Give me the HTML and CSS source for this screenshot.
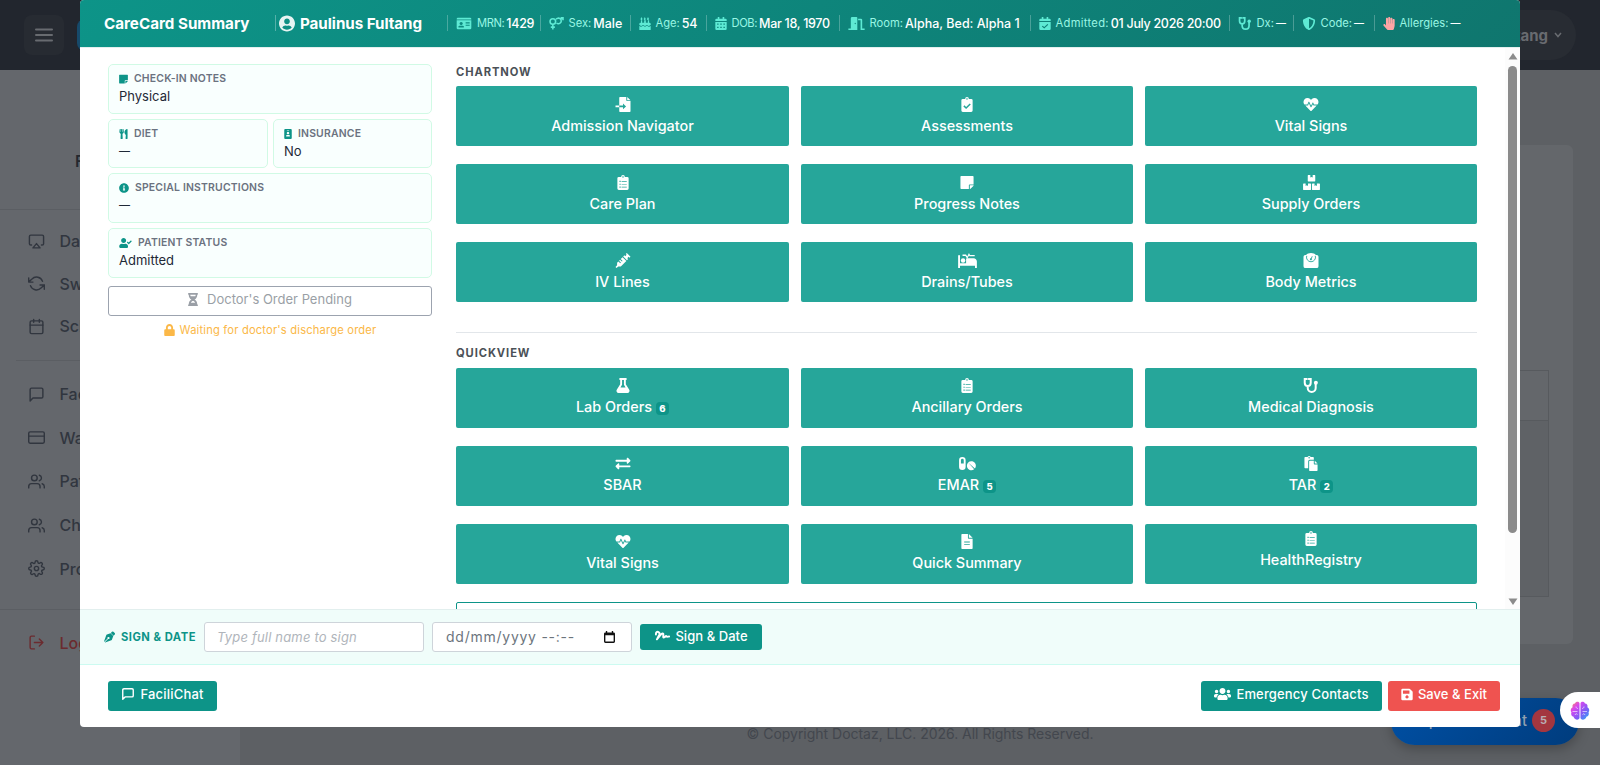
FILE: index.html
```html
<!DOCTYPE html>
<html lang="en">
<head>
<meta charset="utf-8">
<title>CareCard Summary</title>
<link rel="stylesheet" href="styles.css">
</head>
<body>
<svg class="sprite" aria-hidden="true">
  <symbol id="note" viewBox="0 0 448 512"><path d="M312 320h136V56c0-13.300-10.700-24-24-24H24C10.700 32 0 42.700 0 56v400c0 13.300 10.700 24 24 24h264V344c0-13.200 10.800-24 24-24zm129 55l-98 98c-4.500 4.500-10.600 7-17 7h-6V352h128v6.100c0 6.300-2.500 12.400-7 16.900z"/></symbol>
  <symbol id="utensils" viewBox="0 0 416 512"><path d="M207.900 15.200c.8 4.700 16.100 94.500 16.100 128.800 0 52.300-27.800 89.600-68.900 104.600L168 486.700c.7 13.700-10.200 25.300-24 25.300H80c-13.700 0-24.700-11.500-24-25.300l12.900-238.100C27.700 233.600 0 196.200 0 144 0 109.600 15.300 19.900 16.100 15.200 19.300-5.100 61.400-5.400 64 16.300v141.200c1.300 3.400 15.100 3.200 16 0 1.400-25.300 7.900-139.200 8-141.800 3.300-20.800 44.700-20.800 47.900 0 .2 2.700 6.600 116.500 8 141.800.9 3.200 14.800 3.400 16 0V16.300c2.600-21.600 44.800-21.400 47.900-1.100zm119.200 285.700l-15 185.100c-1.200 14 9.900 26 23.900 26h56c13.300 0 24-10.700 24-24V24c0-13.200-10.700-24-24-24-82.500 0-221.400 178.500-64.900 300.900z"/></symbol>
  <symbol id="badge" viewBox="0 0 384 512"><path fill-rule="evenodd" d="M48 0h288a48 48 0 0 1 48 48v416a48 48 0 0 1-48 48H48a48 48 0 0 1-48-48V48A48 48 0 0 1 48 0zM144 48a16 16 0 0 0 0 32h96a16 16 0 0 0 0-32zM192 144a64 64 0 1 0 .1 0zM112 384h160c12 0 22-9 22-20 0-42-30-60-67-60h-70c-37 0-67 18-67 60 0 11 10 20 22 20z"/></symbol>
  <symbol id="info" viewBox="0 0 512 512"><path d="M256 8C119 8 8 119 8 256s111 248 248 248 248-111 248-248S393 8 256 8zm0 110c23.200 0 42 18.800 42 42s-18.800 42-42 42-42-18.800-42-42 18.800-42 42-42zm56 254c0 6.600-5.400 12-12 12h-88c-6.600 0-12-5.400-12-12v-24c0-6.600 5.400-12 12-12h12v-64h-12c-6.600 0-12-5.400-12-12v-24c0-6.600 5.400-12 12-12h64c6.600 0 12 5.400 12 12v100h12c6.600 0 12 5.400 12 12z"/></symbol>
  <symbol id="usercheck" viewBox="0 0 640 512"><path d="M224 256c70.700 0 128-57.300 128-128S294.700 0 224 0 96 57.300 96 128s57.300 128 128 128zm89.600 32h-16.700c-22.200 10.200-46.900 16-72.900 16s-50.600-5.800-72.900-16h-16.700C60.200 288 0 348.200 0 422.400V464c0 26.500 21.500 48 48 48h352c26.500 0 48-21.500 48-48v-41.600c0-74.200-60.200-134.400-134.400-134.400zM633.800 158.500l-27.800-28.200c-4.600-4.700-12.100-4.700-16.800-.1l-104.800 104-45.500-45.800c-4.600-4.700-12.100-4.700-16.800-.1l-28.100 27.900c-4.700 4.600-4.700 12.100-.1 16.800l81.700 82.300c4.600 4.700 12.100 4.700 16.800.1l141.300-140.200c4.600-4.700 4.700-12.200.1-16.700z"/></symbol>
  <symbol id="hourglass" viewBox="0 0 384 512"><path fill-rule="evenodd" d="M24 0h336a24 24 0 0 1 0 64c0 90-47 168-108 192 61 24 108 102 108 192a24 24 0 0 1 0 64H24a24 24 0 0 1 0-64c0-90 47-168 108-192C71 232 24 154 24 64a24 24 0 0 1 0-64zM86 64c2 25 8 46 18 64h176c10-18 16-39 18-64zM108 384h168c-20-42-50-68-84-68s-64 26-84 68z"/></symbol>
  <symbol id="lock" viewBox="0 0 448 512"><path d="M400 224h-24v-72C376 68.200 307.800 0 224 0S72 68.200 72 152v72H48c-26.500 0-48 21.500-48 48v192c0 26.500 21.500 48 48 48h352c26.500 0 48-21.500 48-48V272c0-26.500-21.500-48-48-48zm-104 0H152v-72c0-39.700 32.300-72 72-72s72 32.300 72 72z"/></symbol>
  <symbol id="usercircle" viewBox="0 0 496 512"><path d="M248 8C111 8 0 119 0 256s111 248 248 248 248-111 248-248S385 8 248 8zm0 96c48.600 0 88 39.400 88 88s-39.400 88-88 88-88-39.400-88-88 39.400-88 88-88zm0 344c-58.700 0-111.300-26.600-146.500-68.200 18.800-35.400 55.600-59.800 98.500-59.800 2.400 0 4.800.4 7.100 1.100 13 4.200 26.600 6.900 40.900 6.900 14.300 0 28-2.700 40.900-6.900 2.300-.7 4.700-1.100 7.100-1.100 42.900 0 79.700 24.400 98.500 59.800C359.300 421.400 306.700 448 248 448z"/></symbol>
  <symbol id="idcard" viewBox="0 0 576 512"><path fill-rule="evenodd" d="M48 32h480a48 48 0 0 1 48 48v16H0V80a48 48 0 0 1 48-48zM0 128h576v304a48 48 0 0 1-48 48H48a48 48 0 0 1-48-48zM176 192a64 64 0 1 0 .1 0zM82 416h188c10 0 18-8 18-18 0-40-32-54-64-54h-96c-32 0-64 14-64 54 0 10 8 18 18 18zM352 192h160v32H352zM352 256h160v32H352zM352 320h160v32H352z"/></symbol>
  <symbol id="venusmars" viewBox="0 0 576 512"><g fill="none" stroke="currentColor" stroke-width="62"><circle cx="144" cy="176" r="110"/><path d="M144 286v210M64 400h160M290 235a110 110 0 1 0 -20-140M455 95l90-84M450 32h94v98"/></g></symbol>
  <symbol id="cake" viewBox="0 0 448 512"><path d="M80 0c28 30 42 48 42 75 0 25-16 41-36 41S48 100 48 78C48 48 80 50 80 0zM208 0c28 30 42 48 42 75 0 25-16 41-36 41s-38-16-38-38c0-30 32-28 32-78zM336 0c28 30 42 48 42 75 0 25-16 41-36 41s-38-16-38-38c0-30 32-28 32-78zM64 128h48v96h80v-96h64v96h80v-96h48v96h16a48 48 0 0 1 48 48v40c-38 10-38 38-75 38-38 0-38-38-75-38s-37 38-75 38-37-38-74-38-37 38-74 38c-38 0-38-28-75-38v-40a48 48 0 0 1 48-48h16zM0 352c38 0 38 34 75 34s37-38 74-38 37 38 75 38 37-38 75-38 37 38 74 38 37-34 75-34v160H0z"/></symbol>
  <symbol id="calendar" viewBox="0 0 448 512"><path fill-rule="evenodd" d="M96 0h64v64h128V0h64v64h48a48 48 0 0 1 48 48v48H0v-48a48 48 0 0 1 48-48h48zM0 192h448v272a48 48 0 0 1-48 48H48a48 48 0 0 1-48-48zM72 256v48h56v-48zM196 256v48h56v-48zM320 256v48h56v-48zM72 384v48h56v-48zM196 384v48h56v-48zM320 384v48h56v-48z"/></symbol>
  <symbol id="calcheck" viewBox="0 0 448 512"><path fill-rule="evenodd" d="M96 0h64v64h128V0h64v64h48a48 48 0 0 1 48 48v48H0v-48a48 48 0 0 1 48-48h48zM0 192h448v272a48 48 0 0 1-48 48H48a48 48 0 0 1-48-48zM132 340l-30 30 92 84 158-148-30-32-128 120z"/></symbol>
  <symbol id="door" viewBox="0 0 640 512"><path fill-rule="evenodd" d="M0 448h96V50c0-24 14-40 34-46l190-4c16 0 32 10 32 28v484H0zM270 224c-14 0-24 14-24 32s10 32 24 32 24-14 24-32-10-32-24-32zM384 64h112a48 48 0 0 1 48 48v336h96v64H480V128h-96z"/></symbol>
  <symbol id="stethoscope" viewBox="0 0 512 512"><g fill="none" stroke="currentColor" stroke-width="68" stroke-linecap="round"><path d="M110 36H42v126c0 65 42 110 102 110s102-45 102-110V36h-68M144 272v70c0 80 60 134 136 134s136-54 136-134V214"/></g><circle cx="422" cy="166" r="68"/></symbol>
  <symbol id="shield" viewBox="0 0 512 512"><path d="M466.500 83.700l-192-80a48 48 0 0 0-36.900 0l-192 80C27.700 91.100 16 108.600 16 128c0 198.500 114.500 335.700 221.500 380.300 11.800 4.900 25.100 4.900 36.900 0C360.100 472.600 496 349.300 496 128c0-19.400-11.700-36.900-29.500-44.300zM256.100 446.300l-.1-381 175.900 73.300c-3.300 151.400-82.100 261.100-175.800 307.700z"/></symbol>
  <symbol id="hand" viewBox="0 0 448 512"><path d="M408.800 79c-22 .4-40.800 18.600-40.800 41v136h-8V70c0-22-18-40-40-40s-40 18-40 40v186h-8V40c0-22-18-40-40-40s-40 18-40 40v216h-8V72c0-22-18-40-40-40s-40 18-40 40v264l-33-45c-13-18-38-22-56-9s-21 38-8 56l150 160c9 9 22 14 35 14h178c22 0 41-15 46-37l27-115c3-12 4-24 4-36V119c0-22-18-40-39-40z"/></symbol>
  <symbol id="fileimport" viewBox="0 0 512 512"><path fill-rule="evenodd" d="M152 0h216v112c0 13 11 24 24 24h120v352a24 24 0 0 1-24 24H152a24 24 0 0 1-24-24V352h128v66l104-98-104-98v66H128V24a24 24 0 0 1 24-24zM400 0l112 112H400zM0 288h128v64H0z"/></symbol>
  <symbol id="clipcheck" viewBox="0 0 384 512"><path fill-rule="evenodd" d="M48 64h80a64 64 0 0 1 128 0h80a48 48 0 0 1 48 48v352a48 48 0 0 1-48 48H48a48 48 0 0 1-48-48V112a48 48 0 0 1 48-48zM192 40a24 24 0 1 0 .1 0zM104 284l-36 36 94 92 158-154-36-38-122 118z"/></symbol>
  <symbol id="cliplist" viewBox="0 0 384 512"><path fill-rule="evenodd" d="M48 64h80a64 64 0 0 1 128 0h80a48 48 0 0 1 48 48v352a48 48 0 0 1-48 48H48a48 48 0 0 1-48-48V112a48 48 0 0 1 48-48zM192 40a24 24 0 1 0 .1 0zM72 200v40h40v-40zM144 208v24h176v-24zM72 296v40h40v-40zM144 304v24h176v-24zM72 392v40h40v-40zM144 400v24h176v-24z"/></symbol>
  <symbol id="heart" viewBox="0 0 512 512"><path d="M320.200 243.800l-49.700 99.400c-6 12.100-23.400 11.700-28.900-.6l-56.900-126.300-30 71.700H60.600l182.500 186.500c7.100 7.300 18.600 7.300 25.700 0L451.400 288H342.300l-22.100-44.200zM473.700 73.900l-2.400-2.500c-51.500-52.600-135.800-52.600-187.400 0L256 100l-27.900-28.500c-51.500-52.700-135.900-52.700-187.400 0l-2.400 2.400C-10.400 123.700-12.500 203 31 256h102.400l35.900-86.200c5.400-12.900 23.600-13.200 29.400-.4l58.200 129.300 49-97.900c5.900-11.800 22.700-11.800 28.600 0l27.600 55.200H481c43.500-53 41.400-132.300-7.300-182.100z"/></symbol>
  <symbol id="boxes" viewBox="0 0 576 512"><path d="M176 0h72v88l40-24 40 24V0h72a16 16 0 0 1 16 16v192a16 16 0 0 1-16 16H176a16 16 0 0 1-16-16V16a16 16 0 0 1 16-16zM16 288h72v88l40-24 40 24v-88h88a16 16 0 0 1 16 16v192a16 16 0 0 1-16 16H16a16 16 0 0 1-16-16V304a16 16 0 0 1 16-16zM320 288h72v88l40-24 40 24v-88h88a16 16 0 0 1 16 16v192a16 16 0 0 1-16 16H320a16 16 0 0 1-16-16V304a16 16 0 0 1 16-16z"/></symbol>
  <symbol id="syringe" viewBox="0 0 512 512"><path fill-rule="evenodd" d="M386 0l126 126-34 34-29-29-48 48 30 30-40 40L263 121l40-40 30 30 48-48-29-29zM242 142l128 128-188 188H96l-62 54-34-34 54-62v-86l44-44 64 64 24-24-64-64 32-32 64 64 24-24-64-64z"/></symbol>
  <symbol id="bed" viewBox="0 0 640 512"><path d="M32 64a32 32 0 0 1 32 32v256h208V208c0-18 14-32 32-32h224c62 0 112 50 112 112v224h-64v-80H64v80H0V96a32 32 0 0 1 32-32z"/><circle cx="168" cy="256" r="76"/><path d="M150 54h120l40 68L370 0l36 64h160v48H386l-14-26-60 106-62-90H150z"/></symbol>
  <symbol id="weight" viewBox="0 0 512 512"><path d="M448 64h-26C390 24 324 0 256 0S122 24 90 64H64a64 64 0 0 0-64 64v320a64 64 0 0 0 64 64h384a64 64 0 0 0 64-64V128a64 64 0 0 0-64-64z"/><g fill="none" stroke="#26a69a" stroke-width="30"><path d="M110 96a154 154 0 1 0 292 0"/><path d="M256 210l42-98"/></g><circle cx="252" cy="212" r="34" fill="#26a69a"/></symbol>
  <symbol id="flask" viewBox="0 0 448 512"><path d="M437.200 403.500L320 215V64h8c13.300 0 24-10.700 24-24V24c0-13.300-10.700-24-24-24H120c-13.300 0-24 10.700-24 24v16c0 13.300 10.700 24 24 24h8v151L10.800 403.500C-18.500 450.600 15.300 512 70.900 512h306.200c55.700 0 89.400-61.500 60.100-108.500zM137.900 320l48.200-77.600c3.700-5.200 5.800-11.600 5.800-18.400V64h64v160c0 6.900 2.200 13.200 5.800 18.400l48.200 77.600z"/></symbol>
  <symbol id="exchange" viewBox="0 0 512 512"><path d="M0 168v-16c0-13.300 10.700-24 24-24h360V80c0-21.400 25.900-32 41-17l80 80c9.400 9.400 9.400 24.600 0 34l-80 80c-15 15-41 4.500-41-17v-48H24c-13.300 0-24-10.700-24-24zm488 152H128v-48c0-21.300-25.900-32-41-17l-80 80c-9.400 9.400-9.400 24.600 0 34l80 80c15 15 41 4.400 41-17v-48h360c13.300 0 24-10.700 24-24v-16c0-13.300-10.700-24-24-24z"/></symbol>
  <symbol id="pills" viewBox="0 0 576 512"><path fill-rule="evenodd" d="M112 32a112 112 0 0 1 112 112v224a112 112 0 0 1-224 0V144A112 112 0 0 1 112 32zM112 96a48 48 0 0 0-48 48v112h96V144a48 48 0 0 0-48-48z"/><path d="M299 222c-59 61-58 158 2 219 56 56 141 60 202 13zM529 427c47-61 43-146-13-202-60-60-157-61-218-2z" transform="translate(12)"/></symbol>
  <symbol id="paste" viewBox="0 0 448 512"><path fill-rule="evenodd" d="M128 184c0-31 25-56 56-56h136V56c0-13-11-24-24-24h-81a64 64 0 0 0-110 0H24C11 32 0 43 0 56v336c0 13 11 24 24 24h104zM160 32a24 24 0 1 1-.1 0zM320 160h-136a24 24 0 0 0-24 24v304a24 24 0 0 0 24 24h240a24 24 0 0 0 24-24V288H344a24 24 0 0 1-24-24zM352 160l96 96h-96z"/></symbol>
  <symbol id="file" viewBox="0 0 384 512"><path fill-rule="evenodd" d="M24 0h200v136c0 13 11 24 24 24h136v328a24 24 0 0 1-24 24H24a24 24 0 0 1-24-24V24A24 24 0 0 1 24 0zM256 0l128 128H256zM96 260v30h192v-30zM96 340v30h192v-30z"/></symbol>
  <symbol id="nib" viewBox="0 0 512 512"><path fill-rule="evenodd" d="M136 139c-15 5-28 16-32 32L0 460l14 14 152-152a48 48 0 1 1 24 24L38 498l14 14 289-104c16-4 27-17 32-32l59-168L304 80zM498 74l-60-60a48 48 0 0 0-68 0l-52 52 128 128 52-52a48 48 0 0 0 0-68z"/></symbol>
  <symbol id="signature" viewBox="0 0 640 512"><path fill="none" stroke="currentColor" stroke-width="82" stroke-linecap="round" stroke-linejoin="round" d="M40 190V160c0-60 56-98 110-74 44 20 52 64 34 110L80 400l150-180c70-90 136-100 126-10-10 80-10 120 30 106 50-18 60-58 86-58 24 0 10 30 46 30 30 0 50-8 84-8"/></symbol>
  <symbol id="users" viewBox="0 0 640 512"><path d="M96 224c35.300 0 64-28.700 64-64s-28.700-64-64-64-64 28.700-64 64 28.700 64 64 64zm448 0c35.300 0 64-28.700 64-64s-28.700-64-64-64-64 28.700-64 64 28.700 64 64 64zm32 32h-64c-17.600 0-33.500 7.100-45.100 18.600 40.300 22.100 68.900 62 75.100 109.400h66c17.700 0 32-14.300 32-32v-32c0-35.300-28.700-64-64-64zm-256 0c61.900 0 112-50.100 112-112S381.900 32 320 32 208 82.100 208 144s50.100 112 112 112zm76.800 32h-8.300c-20.800 10-43.900 16-68.500 16s-47.600-6-68.500-16h-8.300C179.600 288 128 339.600 128 403.200V432c0 26.500 21.500 48 48 48h288c26.500 0 48-21.500 48-48v-28.800c0-63.600-51.600-115.200-115.200-115.200zm-223.700-13.400C161.500 263.100 145.600 256 128 256H64c-35.300 0-64 28.700-64 64v32c0 17.700 14.300 32 32 32h65.900c6.300-47.400 34.900-87.300 75.200-109.400z"/></symbol>
  <symbol id="save" viewBox="0 0 448 512"><path fill-rule="evenodd" d="M434 130l-84-84a48 48 0 0 0-34-14H48A48 48 0 0 0 0 80v352a48 48 0 0 0 48 48h352a48 48 0 0 0 48-48V164a48 48 0 0 0-14-34zM224 288a64 64 0 1 0 .1 0zM76 96h229l15 15v101a12 12 0 0 1-12 12H76a12 12 0 0 1-12-12V108a12 12 0 0 1 12-12z"/></symbol>
  <symbol id="message" viewBox="0 0 24 24"><path d="M21 15a2 2 0 0 1-2 2H7l-4 4V5a2 2 0 0 1 2-2h14a2 2 0 0 1 2 2z"/></symbol>
  <symbol id="people" viewBox="0 0 24 24"><path d="M17 21v-2a4 4 0 0 0-4-4H5a4 4 0 0 0-4 4v2M23 21v-2a4 4 0 0 0-3-3.870M16 3.130a4 4 0 0 1 0 7.750"/><circle cx="9" cy="7" r="4"/></symbol>
</svg>

<div class="page">
  <header class="topbar">
    <div class="menu-btn"><svg viewBox="0 0 18 14"><path d="M1 1.500h16M1 7h16M1 12.500h16"/></svg></div>
    <div class="brand"></div>
    <div class="profile"><span>Paulinus Fultang</span><svg viewBox="0 0 10 10"><path d="M2 3l3 3.500L8 3"/></svg></div>
  </header>
  <div class="columns">
    <aside class="sidebar">
      <div class="facility">Facility</div>
      <nav class="nav">
        <a><svg class="line" viewBox="0 0 24 24"><path d="M5 17H4a2 2 0 0 1-2-2V5a2 2 0 0 1 2-2h16a2 2 0 0 1 2 2v10a2 2 0 0 1-2 2h-1M12 15l5 6H7z"/></svg>Dashboard</a>
        <a><svg class="line" viewBox="0 0 24 24"><path d="M23 20v-6h-6M1 4v6h6M20.500 9A9 9 0 0 0 5.600 5.600L1 10M23 14l-4.600 4.400A9 9 0 0 1 3.500 15"/></svg>Switch</a>
        <a><svg class="line" viewBox="0 0 24 24"><rect x="3" y="4" width="18" height="18" rx="2"/><path d="M16 2v4M8 2v4M3 10h18"/></svg>Schedule</a>
      </nav>
      <nav class="nav second">
        <a><svg class="line"><use href="#message"/></svg>FaciliChat</a>
        <a><svg class="line" viewBox="0 0 24 24"><rect x="1" y="4" width="22" height="16" rx="2"/><path d="M1 10h22"/></svg>Wallet</a>
        <a><svg class="line"><use href="#people"/></svg>Patients</a>
        <a><svg class="line"><use href="#people"/></svg>Charts</a>
        <a><svg class="line" viewBox="0 0 24 24"><circle cx="12" cy="12" r="3"/><path d="M19.400 15a1.650 1.650 0 0 0 .33 1.820l.06.06a2 2 0 1 1-2.830 2.830l-.06-.06a1.650 1.650 0 0 0-2.820 1.170V21a2 2 0 0 1-4 0v-.09A1.650 1.650 0 0 0 9 19.400a1.650 1.650 0 0 0-1.820.33l-.06.06a2 2 0 1 1-2.830-2.830l.06-.06A1.650 1.650 0 0 0 3.180 14H3a2 2 0 0 1 0-4h.09A1.650 1.650 0 0 0 4.600 9a1.650 1.650 0 0 0-.33-1.820l-.06-.06a2 2 0 1 1 2.830-2.830l.06.06A1.650 1.650 0 0 0 10 3.180V3a2 2 0 0 1 4 0v.09a1.650 1.650 0 0 0 2.820 1.170l.06-.06a2 2 0 1 1 2.830 2.830l-.06.06A1.650 1.650 0 0 0 20.900 10H21a2 2 0 0 1 0 4h-.09a1.650 1.650 0 0 0-1.510 1z"/></svg>Profile</a>
      </nav>
      <nav class="nav exit"><a><svg class="line" viewBox="0 0 24 24"><path d="M9 21H5a2 2 0 0 1-2-2V5a2 2 0 0 1 2-2h4M16 17l5-5-5-5M21 12H9"/></svg>Logout</a></nav>
    </aside>
    <main class="main">
      <section class="panel"><div class="table"><div class="thead"></div></div></section>
      <p class="copyright">© Copyright Doctaz, LLC. 2026. All Rights Reserved.</p>
    </main>
  </div>
  <div class="chat-fab"><span>Open Live Chat</span><b>5</b></div>
</div>

<div class="assistant"><svg viewBox="0 0 20 20">
  <defs><linearGradient id="brain" x1="0" y1="0" x2="1" y2="1"><stop offset="0" stop-color="#ff9a40"/><stop offset=".28" stop-color="#d946ef"/><stop offset=".65" stop-color="#7c5cf6"/><stop offset="1" stop-color="#22b8f5"/></linearGradient></defs>
  <path fill="url(#brain)" d="M9.500 2.500C9.500 0 5.500 0 5 2.600 3 2.700 2 4.500 2.600 6.200.5 7.300.2 10 1.500 11.300.5 13.500 1.800 15.500 3.600 15.700 4 18.500 8.500 20 9.500 17zM10.500 2.500C10.500 0 14.500 0 15 2.600c2 .1 3 1.900 2.400 3.600 2.100 1.100 2.400 3.800 1.100 5.100 1 2.200-.3 4.200-2.100 4.400-.4 2.800-4.900 4.300-5.900 1.300z"/>
  <path fill="none" stroke="#fff" stroke-opacity=".75" stroke-width=".8" d="M2.500 10.500h5M6 5.500c0 1.500 1 2 2 2M5 14c.5-1.500 2-1.500 2.500-.5M12.500 10.500h4.500M14 5.500c0 1.500-1 2-2 2M15 14c-.5-1.500-2-1.500-2.500-.5"/>
</svg></div>

<div class="modal">
  <header class="head">
    <h1>CareCard Summary</h1>
    <div class="patient"><svg class="i"><use href="#usercircle"/></svg><span>Paulinus Fultang</span></div>
    <div class="facts">
      <div><svg class="i w16"><use href="#idcard"/></svg><small class="tight">MRN:</small><b class="num">1429</b></div>
      <div><svg class="i w15"><use href="#venusmars"/></svg><small>Sex:</small><b>Male</b></div>
      <div><svg class="i w12"><use href="#cake"/></svg><small>Age:</small><b class="num">54</b></div>
      <div><svg class="i w12"><use href="#calendar"/></svg><small class="tight">DOB:</small><b class="num">Mar 18, 1970</b></div>
      <div><svg class="i w17"><use href="#door"/></svg><small>Room:</small><b>Alpha, Bed: Alpha 1</b></div>
      <div><svg class="i w12"><use href="#calcheck"/></svg><small class="loose">Admitted:</small><b class="num">01 July 2026 20:00</b></div>
      <div><svg class="i w14"><use href="#stethoscope"/></svg><small>Dx:</small><b class="dash">—</b></div>
      <div><svg class="i w14"><use href="#shield"/></svg><small>Code:</small><b class="dash">—</b></div>
      <div><svg class="i w12 alert"><use href="#hand"/></svg><small>Allergies:</small><b class="dash">—</b></div>
    </div>
  </header>

  <div class="body">
    <aside class="info">
      <div class="card"><h3><svg class="w9"><use href="#note"/></svg>CHECK-IN NOTES</h3><p>Physical</p></div>
      <div class="pair">
        <div class="card"><h3><svg class="w9"><use href="#utensils"/></svg>DIET</h3><p class="dash">—</p></div>
        <div class="card"><h3><svg class="w8"><use href="#badge"/></svg>INSURANCE</h3><p>No</p></div>
      </div>
      <div class="card"><h3><svg class="w10"><use href="#info"/></svg>SPECIAL INSTRUCTIONS</h3><p class="dash">—</p></div>
      <div class="card"><h3><svg class="w13"><use href="#usercheck"/></svg>PATIENT STATUS</h3><p>Admitted</p></div>
      <div class="pending"><svg><use href="#hourglass"/></svg><span>Doctor's Order Pending</span></div>
      <div class="waiting"><svg><use href="#lock"/></svg><span>Waiting for doctor's discharge order</span></div>
    </aside>

    <div class="content">
      <h2>CHARTNOW</h2>
      <div class="tiles">
        <div class="tile"><svg><use href="#fileimport"/></svg><span>Admission Navigator</span></div>
        <div class="tile"><svg><use href="#clipcheck"/></svg><span>Assessments</span></div>
        <div class="tile"><svg><use href="#heart"/></svg><span>Vital Signs</span></div>
        <div class="tile"><svg><use href="#cliplist"/></svg><span>Care Plan</span></div>
        <div class="tile"><svg><use href="#note"/></svg><span>Progress Notes</span></div>
        <div class="tile"><svg class="box"><use href="#boxes"/></svg><span>Supply Orders</span></div>
        <div class="tile"><svg><use href="#syringe"/></svg><span>IV Lines</span></div>
        <div class="tile"><svg class="wide"><use href="#bed"/></svg><span>Drains/Tubes</span></div>
        <div class="tile"><svg><use href="#weight"/></svg><span>Body Metrics</span></div>
      </div>
      <hr>
      <h2>QUICKVIEW</h2>
      <div class="tiles quick">
        <div class="tile"><svg><use href="#flask"/></svg><span>Lab Orders <i>6</i></span></div>
        <div class="tile"><svg><use href="#cliplist"/></svg><span>Ancillary Orders</span></div>
        <div class="tile"><svg><use href="#stethoscope"/></svg><span>Medical Diagnosis</span></div>
        <div class="tile"><svg><use href="#exchange"/></svg><span>SBAR</span></div>
        <div class="tile"><svg class="box"><use href="#pills"/></svg><span>EMAR <i>5</i></span></div>
        <div class="tile"><svg><use href="#paste"/></svg><span>TAR <i>2</i></span></div>
        <div class="tile"><svg><use href="#heart"/></svg><span>Vital Signs</span></div>
        <div class="tile"><svg><use href="#file"/></svg><span>Quick Summary</span></div>
        <div class="tile raised"><svg><use href="#cliplist"/></svg><span>HealthRegistry</span></div>
      </div>
      <div class="outline"></div>
    </div>
    <div class="scroll"><svg viewBox="0 0 10 7"><path d="M5 0l4.500 6.500h-9z"/></svg><div class="thumb"></div><svg viewBox="0 0 10 7"><path d="M5 7L.5.500h9z"/></svg></div>
  </div>

  <div class="sign">
    <svg class="nib"><use href="#nib"/></svg><strong>SIGN &amp; DATE</strong>
    <input class="field name" placeholder="Type full name to sign">
    <div class="field date"><span>dd/mm/yyyy --:--</span><svg viewBox="0 0 12 13"><path fill-rule="evenodd" d="M2 0h1.500v1.500h5V0H10v1.500h.5A1.500 1.500 0 0 1 12 3v8.500a1.500 1.500 0 0 1-1.500 1.500h-9A1.500 1.500 0 0 1 0 11.500V3a1.500 1.500 0 0 1 1.500-1.500H2zM1.500 4.500v7h9v-7z"/></svg></div>
    <div class="btn small"><svg class="w17"><use href="#signature"/></svg><span>Sign &amp; Date</span></div>
  </div>
  <footer class="foot">
    <div class="btn chat"><svg class="line"><use href="#message"/></svg><span>FaciliChat</span></div>
    <div class="btn contacts"><svg><use href="#users"/></svg><span>Emergency Contacts</span></div>
    <div class="btn exit-btn"><svg><use href="#save"/></svg><span>Save &amp; Exit</span></div>
  </footer>
</div>
</body>
</html>
```
FILE: styles.css
```css
* { box-sizing: border-box; }
body { margin: 0; width: 1600px; height: 765px; overflow: hidden; position: relative; font-family: Inter, "Open Sans", sans-serif; background: #5d6064; }
h1, h2, h3, p { margin: 0; }
svg { fill: currentColor; flex: none; display: block; }
.sprite { position: absolute; width: 0; height: 0; }
.line { fill: none; stroke: currentColor; stroke-width: 2; stroke-linecap: round; stroke-linejoin: round; }

/* Dimmed page behind the dialog */
.page { height: 765px; display: flex; flex-direction: column; }
.topbar { height: 70px; background: #22262e; display: flex; align-items: center; padding: 0 24px; }
.menu-btn { width: 40px; height: 40px; border-radius: 8px; background: #272b32; display: grid; place-items: center; }
.menu-btn svg { width: 18px; height: 14px; stroke: #686b70; stroke-width: 2; stroke-linecap: round; }
.brand { width: 40px; height: 32px; margin-left: 13px; border-radius: 8px; background: #164a6b; }
.profile { margin-left: auto; width: 200px; height: 50px; border-radius: 25px; background: #282c33; color: #686b70; display: flex; align-items: center; justify-content: flex-end; gap: 5px; padding-right: 13px; font-size: 15px; font-weight: 700; }
.profile svg { width: 10px; height: 10px; fill: none; stroke: currentColor; stroke-width: 1.500; }
.columns { flex: 1; display: flex; }
.sidebar { width: 240px; background: #64676c; color: #31363f; }
.facility { height: 140px; padding: 79px 0 0 75px; border-bottom: 1px solid #5b5e63; font-size: 16px; font-weight: 600; line-height: 24px; color: #24282f; }
.nav { display: flex; flex-direction: column; gap: 18.500px; padding: 19px 0 0 27.500px; }
.nav a { display: flex; align-items: center; gap: 15px; height: 24px; font-size: 16px; font-weight: 500; }
.nav svg { width: 17px; height: 17px; overflow: visible; }
.nav.second { margin: 22px 0 0 16px; border-top: 1px solid #5b5e63; padding: 21px 0 0 11.500px; gap: 19.700px; }
.nav.exit { margin-top: 28px; border-top: 1px solid #5b5e63; padding-top: 21px; color: #6b2b2f; }
.main { flex: 1; padding: 75px 27px 0; background: #5d6064; }
.panel { height: 499px; border-radius: 6px; background: #64676b; padding: 225px 24px 0; }
.table { height: 227px; border: 1px solid #575a5e; background: #5f6266; }
.thead { height: 50px; background: #64676b; border-bottom: 1px solid #575a5e; }
.copyright { margin-top: 79px; text-align: center; font-size: 14px; line-height: 22px; letter-spacing: -.02px; color: #43474e; }
.chat-fab { position: absolute; left: 1391px; top: 698px; width: 188px; height: 47px; border-radius: 24px; background: linear-gradient(135deg, #0050a5, #003c7d); box-shadow: 0 4px 12px rgba(0,0,0,.25); display: flex; align-items: center; gap: 5px; justify-content: flex-end; padding: 0 24px 3px 0; color: #90a0b0; font-size: 15px; font-weight: 500; }
.chat-fab b { width: 23px; height: 23px; border-radius: 50%; background: #a3363f; color: #b9b0b4; display: grid; place-items: center; font-size: 11px; }
.assistant { position: absolute; left: 1560px; top: 692px; width: 40px; height: 36px; border-radius: 18px 0 0 18px; background: #fff; padding: 9px 0 0 10px; z-index: 2; }
.assistant svg { width: 20px; height: 20px; }

/* Dialog */
.modal { position: absolute; left: 80px; top: 0; width: 1440px; height: 727px; border-radius: 4px; overflow: hidden; background: #fff; display: flex; flex-direction: column; }
.head { height: 47px; flex: none; background: linear-gradient(135deg, #0d9488, #0f766e); color: #fff; display: flex; align-items: center; padding: 0 0 1px 24px; white-space: nowrap; }
.head h1 { width: 171px; font-size: 15.200px; font-weight: 700; }
.patient { display: flex; align-items: center; width: 172px; height: 16px; border-left: 1px solid rgba(255,255,255,.3); padding-left: 3px; font-size: 15.200px; font-weight: 700; letter-spacing: -.05px; gap: 5px; }
.patient svg { width: 16px; height: 17px; opacity: .9; }
.facts { display: grid; grid-template-columns: 92.500px 90px 76px 133px 191px 199px 64px 81px 110px; }
.facts > div { display: flex; align-items: center; height: 16px; border-left: 1px solid rgba(255,255,255,.25); padding-left: 8px; }
.facts svg { height: 13px; margin-right: 5px; color: #5eead4; }
.facts svg.alert { color: #fca5a5; }
.facts small { font-size: 11.200px; color: #99f6e4; margin-right: 2px; }
.facts small.tight { letter-spacing: -.4px; }
.facts small.loose { letter-spacing: .3px; }
.facts b { font-size: 12.500px; font-weight: 500; }
.facts b.num { letter-spacing: -.3px; }
.facts b.dash { font-size: 10px; }
.w8 { width: 8px; } .w9 { width: 9px; } .w10 { width: 10px; } .w12 { width: 12px; } .w13 { width: 13px; }
.w14 { width: 14px; } .w15 { width: 15px; } .w16 { width: 16px; } .w17 { width: 17px; }

.body { height: 562px; flex: none; display: flex; overflow: hidden; border-top: 1px solid #e3efee; padding-left: 28px; }
.info { width: 324px; padding-top: 16px; display: flex; flex-direction: column; gap: 5px; }
.card { height: 50px; border: 1px solid #d1fae5; border-radius: 5px; background: #f9fffe; padding: 6.500px 10px 0; }
.card h3 { display: flex; align-items: center; gap: 6px; height: 14px; font-size: 10.400px; font-weight: 600; letter-spacing: .2px; color: #6b7280; }
.card h3 svg { height: 10px; color: #0d9488; }
.card p { margin-top: .5px; font-size: 13px; line-height: 20px; color: #1f2937; }
.card p.dash { font-size: 11px; }
.pair { display: grid; grid-template-columns: 160px 159px; gap: 5px; }
.pair .card { height: 49px; }
.pending { height: 30px; margin-top: 3px; border: 1px solid #9ca3af; border-radius: 3px; display: flex; align-items: center; justify-content: center; gap: 9px; color: #9a9fa6; font-size: 13px; padding-bottom: 4px; }
.pending svg { width: 10px; height: 13px; }
.waiting { display: flex; align-items: center; justify-content: center; gap: 5px; height: 18px; font-size: 11.200px; letter-spacing: .17px; color: #fbb848; }
.waiting svg { width: 11px; height: 12px; }

.content { width: 1021px; margin-left: 24px; padding-top: 16px; }
.content h2 { height: 22px; font-size: 11.200px; line-height: 16px; font-weight: 700; letter-spacing: .9px; color: #4b5157; }
.tiles { display: grid; grid-template-columns: 333px 332px 332px; grid-auto-rows: 60px; gap: 18px 12px; }
.tile { border-radius: 2px; background: #26a69a; color: #fff; display: flex; flex-direction: column; align-items: center; padding-top: 11px; font-size: 14.400px; font-weight: 500; }
.tile svg { width: 16px; height: 15px; }
.tile svg.wide { width: 19px; }
.tile svg.box { width: 17px; }
.tile span { line-height: 20px; margin-top: 4px; display: flex; align-items: center; gap: 4px; }
.tile i { font-style: normal; font-size: 9.500px; font-weight: 800; line-height: 13px; width: 13px; text-align: center; border-radius: 4px; background: #0d9488; margin-top: 2px; }
.quick .tile { padding-top: 10px; }
.quick .raised { padding-top: 7px; }
.content hr { border: 0; border-top: 1px solid #e2e6ea; margin: 30px 0 12px; }
.content hr + h2 { height: 23px; }
.outline { height: 60px; margin-top: 18px; border: 1px solid #0d9488; border-radius: 2px; }
.scroll { width: 15px; margin-left: auto; background: #fcfcfc; color: #8b8b8b; display: flex; flex-direction: column; align-items: center; padding: 5px 0 4px; }
.scroll svg { width: 10px; height: 7px; }
.thumb { width: 9px; height: 467px; margin: 6px 0 auto; border-radius: 5px; background: #8b8b8b; }

.sign { height: 56px; flex: none; border-top: 1px solid #e2efee; border-bottom: 1px solid #ccfbf1; background: #f0fdfa; display: flex; align-items: center; padding: 0 0 1px 24px; color: #0d9488; }
.nib { width: 11px; height: 12px; }
.sign strong { width: 83px; margin-left: 6px; font-size: 11.200px; letter-spacing: .5px; white-space: nowrap; }
.field { height: 30px; border: 1px solid #ced4da; border-radius: 3px; background: #fff; font-family: inherit; font-size: 13px; }
.name { width: 220px; padding: 0 12px; margin-right: 8px; font-style: italic; letter-spacing: .18px; }
.name::placeholder { color: #b0b5bb; }
.date { width: 200px; margin-right: 8px; padding: 0 16px 0 13px; display: flex; align-items: center; justify-content: space-between; color: #6c757d; font-size: 14px; letter-spacing: .75px; white-space: nowrap; }
.date svg { width: 11px; height: 12px; color: #111; }
.btn { height: 30px; border-radius: 3px; background: #0d9488; color: #fff; display: flex; align-items: center; justify-content: center; gap: 5px; font-size: 13px; font-weight: 500; letter-spacing: .05px; white-space: nowrap; padding-bottom: 4px; }
.btn svg { height: 12px; }
.btn.small { height: 26px; width: 122px; padding-bottom: 2px; gap: 4px; }
.foot { flex: 1; display: flex; align-items: flex-start; padding: 16px 20px 0 28px; }
.chat { width: 109px; margin-right: auto; letter-spacing: .2px; }
.chat svg { width: 14px; height: 14px; stroke-width: 2.400; overflow: visible; }
.contacts { width: 181px; margin-right: 6px; letter-spacing: .15px; }
.contacts svg { width: 17px; height: 14px; }
.exit-btn { width: 112px; background: #ef5350; }
.exit-btn svg { width: 12px; height: 13px; }
```
